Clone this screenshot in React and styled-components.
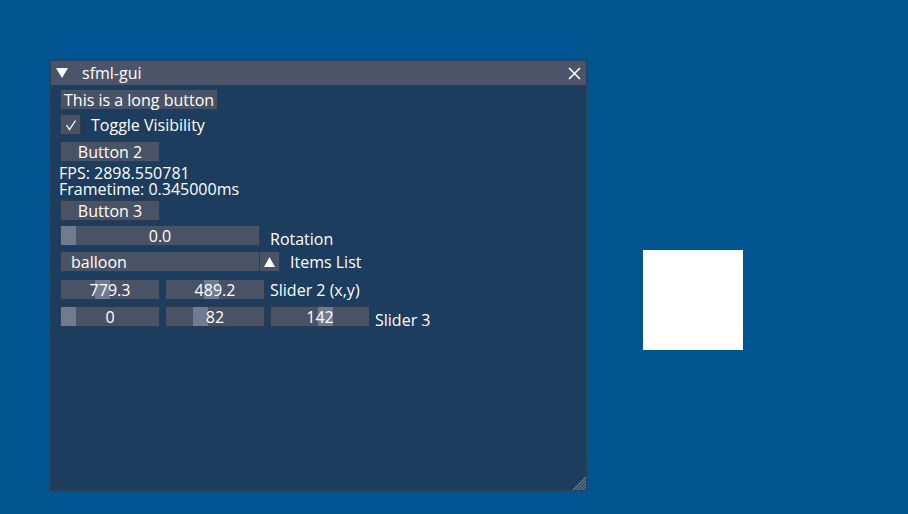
import React from 'react'
import styled, { createGlobalStyle } from 'styled-components'

const GlobalStyle = createGlobalStyle`
    html, body {
        margin: 0;
        padding: 0;
        background: #005591;
        width: 908px;
        height: 514px;
        overflow: hidden;
        font-family: "Open Sans", "Noto Sans", sans-serif;
    }
`

const Page = styled.div`
    width: 908px;
    height: 514px;
    display: flex;
    align-items: flex-start;
    padding: 60px 0 0 50px;
    box-sizing: border-box;
`

const Window = styled.div`
    width: 537px;
    height: 431px;
    background: #1d3d5e;
    border: 1px solid #2c3f58;
    box-sizing: border-box;
    display: flex;
    flex-direction: column;
    position: relative;
`

const TitleBar = styled.div`
    height: 24px;
    background: #4b5468;
    display: flex;
    align-items: center;
    padding: 0 5px 0 5px;
    color: #ffffff;
    font-size: 16px;
`

const Title = styled.span`
    margin-left: 14px;
    flex: 1;
`

const Body = styled.div`
    display: flex;
    flex-direction: column;
    padding: 4px 9px 0 9px;
    color: #ffffff;
    font-size: 16px;
`

const Row = styled.div`
    display: flex;
    align-items: center;
    height: 21px;
    margin-top: ${p => p.gap || 0}px;
`

const Frame = styled.div`
    height: 21px;
    box-sizing: border-box;
    background: #4a5366;
    border: 1px solid #2e3a4e;
    display: flex;
    align-items: center;
    justify-content: ${p => p.left ? 'flex-start' : 'center'};
    padding: ${p => p.left ? '0 10px' : '0 3px'};
    width: ${p => p.w ? `${p.w}px` : 'auto'};
    margin-right: ${p => p.mr || 0}px;
    position: relative;
    line-height: 1;
    color: #ffffff;
`

const Check = styled(Frame)`
    width: 21px;
    padding: 0;
`

const Label = styled.span`
    margin-left: ${p => p.ml || 10}px;
    position: relative;
    top: ${p => p.drop || 0}px;
    line-height: 1;
`

const TextBlock = styled.div`
    display: flex;
    flex-direction: column;
    margin: 3px 0 0 -1px;
`

const TextLine = styled.div`
    line-height: 16px;
    height: 16px;
`

const Grab = styled.div`
    position: absolute;
    top: 0;
    bottom: 0;
    width: 15px;
    background: #6e7b90;
`

const Value = styled.span`
    position: relative;
`

const ArrowBtn = styled(Frame)`
    width: 21px;
    padding: 0;
    margin-left: -1px;
`

const Grip = styled.svg`
    position: absolute;
    right: 0;
    bottom: 0;
`

const Square = styled.div`
    width: 100px;
    height: 100px;
    background: #ffffff;
    margin: 190px 0 0 56px;
`

const Slider = ({ value, grab, w = 100, mr = 0 }) => (
    <Frame w={w} mr={mr}>
        <Grab style={{ left: grab }} />
        <Value>{value}</Value>
    </Frame>
)

export default function App() {
    return (
        <>
            <GlobalStyle />
            <Page>
                <Window>
                    <TitleBar>
                        <svg width="12" height="11" viewBox="0 0 12 11">
                            <polygon points="0,0 12,0 6,10" fill="#fff" />
                        </svg>
                        <Title>sfml-gui</Title>
                        <svg width="13" height="13" viewBox="0 0 13 13">
                            <path d="M1 1 L12 12 M12 1 L1 12" stroke="#fff" strokeWidth="1.6" />
                        </svg>
                    </TitleBar>
                    <Body>
                        <Row><Frame>This is a long button</Frame></Row>
                        <Row gap={4}>
                            <Check>
                                <svg width="12" height="12" viewBox="0 0 12 12">
                                    <path d="M1.5 6 L4.5 10.5 L10.5 1.5" stroke="#fff" strokeWidth="1.3" fill="none" />
                                </svg>
                            </Check>
                            <Label>Toggle Visibility</Label>
                        </Row>
                        <Row gap={6}><Frame w={100}>Button 2</Frame></Row>
                        <TextBlock>
                            <TextLine>FPS: 2898.550781</TextLine>
                            <TextLine>Frametime: 0.345000ms</TextLine>
                        </TextBlock>
                        <Row gap={3}><Frame w={100}>Button 3</Frame></Row>
                        <Row gap={4}>
                            <Slider w={200} value="0.0" grab={0} />
                            <Label drop={3}>Rotation</Label>
                        </Row>
                        <Row gap={5}>
                            <Frame w={200} left>balloon</Frame>
                            <ArrowBtn>
                                <svg width="11" height="10" viewBox="0 0 11 10">
                                    <polygon points="5.5,0 11,10 0,10" fill="#fff" />
                                </svg>
                            </ArrowBtn>
                            <Label>Items List</Label>
                        </Row>
                        <Row gap={7}>
                            <Slider value="779.3" grab={34} mr={5} />
                            <Slider value="489.2" grab={38} />
                            <Label ml={5}>Slider 2 (x,y)</Label>
                        </Row>
                        <Row gap={6}>
                            <Slider value="0" grab={0} mr={5} />
                            <Slider value="82" grab={27} mr={5} />
                            <Slider value="142" grab={47} />
                            <Label ml={5} drop={3}>Slider 3</Label>
                        </Row>
                    </Body>
                    <Grip width="14" height="14" viewBox="0 0 14 14">
                        <path d="M14 0 L14 14 L0 14 Z" fill="#5b6d88" />
                        <path d="M3 14 L14 3 M6 14 L14 6 M9 14 L14 9 M12 14 L14 12" stroke="#1d3d5e" strokeWidth="1" />
                    </Grip>
                </Window>
                <Square />
            </Page>
        </>
    )
}
